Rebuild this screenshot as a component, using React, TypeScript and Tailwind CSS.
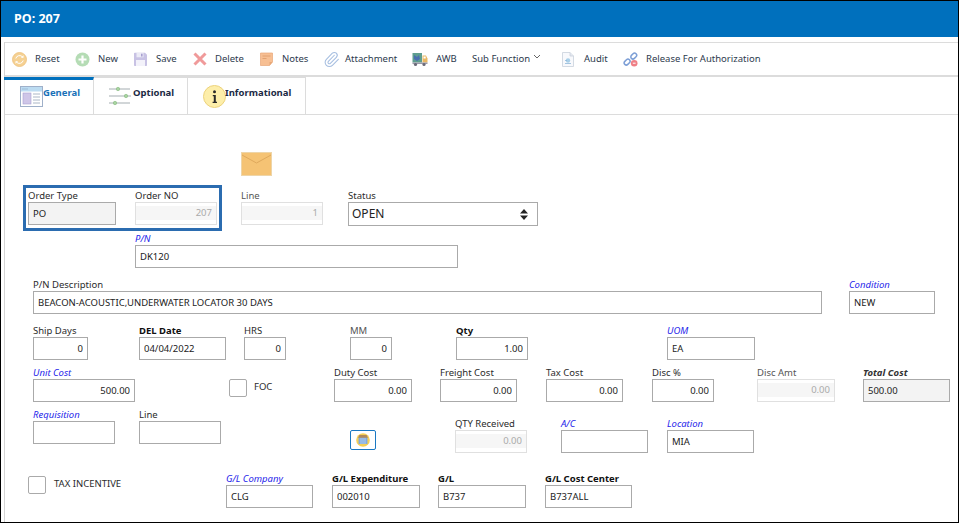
import React from "react";
import { Paperclip } from "lucide-react";

const FONT = "font-['Noto_Sans','Open_Sans',sans-serif]";

type Kind = "plain" | "blue" | "bold" | "total" | "muted";
const LABEL: Record<Kind, string> = {
  plain: "text-[#2b2b2b]",
  muted: "text-[#555]",
  blue: "italic text-[#2626ea]",
  bold: "font-bold text-[#111]",
  total: "italic font-bold text-[#333]",
};

function Field({
  label,
  kind = "plain",
  value = "",
  right = false,
  variant = "normal",
  className = "",
}: {
  label: string;
  kind?: Kind;
  value?: string;
  right?: boolean;
  variant?: "normal" | "grey" | "disabled";
  className?: string;
}) {
  const align = right ? "text-right" : "text-left";
  return (
    <div className={`flex flex-col shrink-0 ${className}`}>
      <label className={`h-[12px] text-[9.5px] leading-[12px] whitespace-nowrap ${LABEL[kind]}`}>{label}</label>
      {variant === "disabled" ? (
        <div className="h-[23px] border border-[#e0e0e0] bg-white pt-[3px]">
          <input
            readOnly
            value={value}
            className={`block w-full h-[14px] bg-[#f6f6f6] px-[4px] text-[9.5px] text-[#aaa] outline-none ${align}`}
          />
        </div>
      ) : (
        <input
          readOnly
          value={value}
          className={`block w-full h-[23px] border border-[#aaa] px-[4px] text-[9.5px] text-[#222] outline-none ${align} ${
            variant === "grey" ? "bg-[#f3f3f3]" : "bg-white"
          }`}
        />
      )}
    </div>
  );
}

function Tool({ icon, label, className, iconBox }: { icon: React.ReactNode; label: string; className: string; iconBox: string }) {
  return (
    <div className={`flex items-center shrink-0 text-[9.5px] text-[#2d3a4d] whitespace-nowrap ${className}`}>
      <span className={`flex items-center shrink-0 ${iconBox}`}>{icon}</span>
      <span className="mt-[1px]">{label}</span>
    </div>
  );
}

const ResetIcon = () => (
  <svg width="15" height="15" viewBox="0 0 15 15">
    <circle cx="7.5" cy="7.5" r="7" fill="#f5d193" stroke="#eebf78" strokeWidth="0.8" />
    <path d="M3.8 6.5A3.9 3.9 0 0 1 10.6 5" fill="none" stroke="#fff" strokeWidth="1" />
    <path d="M11.2 8.5A3.9 3.9 0 0 1 4.4 10" fill="none" stroke="#fff" strokeWidth="1" />
    <path d="M11.5 3.2v2.6H8.9z" fill="#fff" />
    <path d="M3.5 11.8V9.2h2.6z" fill="#fff" />
  </svg>
);
const NewIcon = () => (
  <svg width="15" height="15" viewBox="0 0 15 15">
    <circle cx="7.5" cy="7.5" r="7" fill="#b5dcb5" />
    <path d="M7.5 3.5v8M3.5 7.5h8" stroke="#fff" strokeWidth="2.2" />
  </svg>
);
const SaveIcon = () => (
  <svg width="15" height="15" viewBox="0 0 15 15">
    <path d="M1 1.5A.8.8 0 0 1 1.8.7H12l2 2v10.6a.8.8 0 0 1-.8.8H1.8a.8.8 0 0 1-.8-.8z" fill="#c8c2e4" />
    <rect x="3.5" y="1" width="7" height="4.3" fill="#ecebf6" />
    <rect x="8" y="1.7" width="1.6" height="2.8" fill="#a79fd0" />
    <rect x="3" y="8" width="9" height="6" fill="#f3f2fa" />
  </svg>
);
const DeleteIcon = () => (
  <svg width="14" height="14" viewBox="0 0 14 14">
    <path d="M1.5 1.5l11 11M12.5 1.5l-11 11" stroke="#f09a9a" strokeWidth="3" />
  </svg>
);
const NotesIcon = () => (
  <svg width="13" height="14" viewBox="0 0 13 14">
    <path d="M.5 1h12v9l-3 3.5H.5z" fill="#f7bf93" stroke="#e8a878" strokeWidth="0.7" />
    <path d="M2.5 4h8M2.5 6.5h4" stroke="#dc9a68" strokeWidth="0.8" />
    <path d="M12.5 10h-3v3.5z" fill="#e8a878" />
  </svg>
);
const TruckIcon = () => (
  <svg width="16" height="15" viewBox="0 0 16 15">
    <rect x="0.5" y="1" width="9.5" height="9.5" fill="#5f9e8f" />
    <path d="M2 3l3 2 2-2 1 4-3 2-3-2z" fill="#4a6fb0" />
    <path d="M10.5 3.5H14l1.5 3v4h-5z" fill="#e9b863" />
    <rect x="11.5" y="4.5" width="2.2" height="2" fill="#fff" />
    <rect x="0.5" y="10.5" width="15" height="1.5" fill="#9a9aa8" />
    <circle cx="3.5" cy="12.5" r="1.6" fill="#6a6a78" />
    <circle cx="12" cy="12.5" r="1.6" fill="#6a6a78" />
  </svg>
);
const AuditIcon = () => (
  <svg width="12" height="15" viewBox="0 0 12 15">
    <path d="M.5.5h7.5l3.5 3.5v10.5H.5z" fill="#f8f9fc" stroke="#c9d0dc" strokeWidth="0.8" />
    <path d="M8 .5V4h3.5" fill="#e4e8f0" stroke="#c9d0dc" strokeWidth="0.8" />
    <circle cx="6" cy="8.5" r="2.2" fill="#a9cfe8" />
    <path d="M3 8.5h2M3 11.5h6" stroke="#8fb8d8" strokeWidth="0.8" />
  </svg>
);
const ReleaseIcon = () => (
  <svg width="15" height="15" viewBox="0 0 15 15">
    <g fill="none" stroke="#7d9fd6" strokeWidth="1.5">
      <rect x="0.9" y="8" width="6.5" height="4.2" rx="2.1" transform="rotate(-45 4.1 10.1)" />
      <rect x="7.5" y="2" width="6.5" height="4.2" rx="2.1" transform="rotate(-45 10.7 4.1)" />
    </g>
    <circle cx="11.2" cy="11.2" r="3.3" fill="#ef7f86" />
    <path d="M9.8 11.2h2.8" stroke="#fff" strokeWidth="1" />
  </svg>
);
const GeneralIcon = () => (
  <svg width="23" height="21" viewBox="0 0 23 21" className="shrink-0">
    <rect x="0.5" y="0.5" width="22" height="20" fill="#fff" stroke="#9fb0c9" />
    <rect x="1" y="1" width="21" height="4.5" fill="#bcdcf2" />
    <path d="M2.5 3h1M4.5 3h1M6.5 3h1" stroke="#7f9bbc" />
    <rect x="3" y="7" width="8" height="11" fill="#cfc6e8" stroke="#a9a0cf" strokeWidth="0.6" />
    <path d="M13 8h7M13 11h7M13 14h7M13 17h7" stroke="#aab6c6" />
  </svg>
);
const OptionalIcon = () => (
  <svg width="23" height="20" viewBox="0 0 23 20" className="shrink-0">
    <g stroke="#9aa4a8" strokeWidth="0.9">
      <path d="M0 3h21M0 10h22M0 17h21" />
    </g>
    <g fill="#a8d4a0" stroke="#86b880" strokeWidth="0.6">
      <circle cx="9" cy="3" r="1.7" />
      <circle cx="17" cy="10" r="1.7" />
      <circle cx="6" cy="17" r="1.7" />
    </g>
  </svg>
);
const InfoIcon = () => (
  <svg width="23" height="23" viewBox="0 0 23 23" className="shrink-0">
    <circle cx="11.5" cy="11.5" r="11" fill="#fdeeaa" stroke="#ecd27c" />
    <circle cx="11.5" cy="6.8" r="1.5" fill="#2a2a2a" />
    <path d="M9.8 10h3v6.8h1.2v1.2H9.6v-1.2h1.2V11.2h-1z" fill="#2a2a2a" />
  </svg>
);
const EnvelopeIcon = () => (
  <svg width="31" height="24" viewBox="0 0 31 24">
    <rect x="0.5" y="0.5" width="30" height="23" fill="#f5c374" stroke="#eed5a8" />
    <path d="M1 3l14.5 8L30 3" fill="none" stroke="#dfa95c" strokeWidth="1" />
  </svg>
);
const Checkbox = () => <span className="block shrink-0 w-[18px] h-[18px] bg-white border border-[#aaa] rounded-[2px]" />;

export default function App() {
  return (
    <div className={`w-[959px] h-[523px] overflow-hidden bg-white border border-black ${FONT}`}>
      <header className="h-[36px] bg-[#0070bd] flex items-center pl-[13px] text-[12.5px] font-bold text-white">PO: 207</header>

      <div className="ml-[3px] mt-[5px] h-[480px] border-l border-[#d4d4d4]">
        {/* toolbar */}
        <div className="h-[35px] border-t border-b-2 border-[#dcdcdc] flex items-center pl-[7px]">
          <Tool className="w-[63px]" iconBox="w-[23px]" icon={<ResetIcon />} label="Reset" />
          <Tool className="w-[58px]" iconBox="w-[23px]" icon={<NewIcon />} label="New" />
          <Tool className="w-[60px]" iconBox="w-[23px]" icon={<SaveIcon />} label="Save" />
          <Tool className="w-[67px]" iconBox="w-[22px]" icon={<DeleteIcon />} label="Delete" />
          <Tool className="w-[63px]" iconBox="w-[22px]" icon={<NotesIcon />} label="Notes" />
          <Tool
            className="w-[89px]"
            iconBox="w-[22px]"
            icon={<Paperclip size={17} strokeWidth={1.5} className="text-[#a6bee0]" />}
            label="Attachment"
          />
          <Tool className="w-[60px]" iconBox="w-[24px]" icon={<TruckIcon />} label="AWB" />
          <div className="w-[90px] shrink-0 flex items-start mt-[1px] text-[9.5px] text-[#2d3a4d] whitespace-nowrap">
            <span>Sub Function</span>
            <svg width="8" height="5" viewBox="0 0 8 5" className="ml-[3px] mt-[2px]">
              <path d="M1 1l3 3 3-3" fill="none" stroke="#555" strokeWidth="0.9" />
            </svg>
          </div>
          <Tool className="w-[61px]" iconBox="w-[22px]" icon={<AuditIcon />} label="Audit" />
          <Tool className="" iconBox="w-[23px]" icon={<ReleaseIcon />} label="Release For Authorization" />
        </div>

        {/* tabs */}
        <div className="h-[38px] border-b border-[#dcdcdc] flex">
          <div className="relative w-[90px] border-r border-[#dcdcdc] border-t-[3px] border-t-[#0070bd] -ml-px pl-[16px] pt-[6px] flex items-start text-[9.5px] leading-[12px] font-bold text-[#1a72b8]">
            <GeneralIcon />
            <span className="mt-[1px]">General</span>
          </div>
          <div className="w-[94px] border-r border-t border-[#dcdcdc] pl-[15px] pt-[8px] flex items-start text-[9.5px] leading-[12px] font-bold text-[#1b2a44]">
            <OptionalIcon />
            <span className="ml-[1px] mt-[1px]">Optional</span>
          </div>
          <div className="w-[118px] border-r border-t border-[#dcdcdc] pl-[15px] pt-[7px] flex items-start text-[9.5px] leading-[12px] font-bold text-[#1b2a44]">
            <InfoIcon />
            <span className="-ml-px mt-[2px]">Informational</span>
          </div>
        </div>

        {/* form */}
        <div className="flex flex-col">
          <div className="ml-[236px] mt-[37px] h-[24px]">
            <EnvelopeIcon />
          </div>

          <div className="flex items-start mt-[9px]">
            <div className="ml-[18px] w-[199px] h-[46px] border-[3px] border-[#2b6cb0] flex items-start pt-[2px] pl-[2px]">
              <Field className="w-[88px]" label="Order Type" value="PO" variant="grey" />
              <Field className="ml-[19px] w-[82px]" label="Order NO" value="207" right variant="disabled" />
            </div>
            <Field className="ml-[19px] mt-[5px] w-[82px]" label="Line" kind="muted" value="1" right variant="disabled" />
            <div className="ml-[25px] mt-[5px] w-[190px] shrink-0 flex flex-col">
              <label className="h-[12px] text-[9.5px] leading-[12px] text-[#2b2b2b]">Status</label>
              <div className="h-[24px] border border-[#aaa] flex items-center justify-between pl-[3px] pr-[9px] text-[12px] text-[#222]">
                <span>OPEN</span>
                <svg width="8" height="11" viewBox="0 0 8 11">
                  <path d="M4 0l4 4.5H0zM4 11L0 6.5h8z" fill="#222" />
                </svg>
              </div>
            </div>
          </div>

          <div className="flex mt-[2px]">
            <Field className="ml-[130px] w-[323px]" label="P/N" kind="blue" value="DK120" />
          </div>

          <div className="flex mt-[11px]">
            <Field className="ml-[28px] w-[789px]" label="P/N Description" value="BEACON-ACOUSTIC,UNDERWATER LOCATOR 30 DAYS" />
            <Field className="ml-[27px] w-[86px]" label="Condition" kind="blue" value="NEW" />
          </div>

          <div className="flex mt-[11px]">
            <Field className="ml-[28px] w-[55px]" label="Ship Days" value="0" right />
            <Field className="ml-[51px] w-[87px]" label="DEL Date" kind="bold" value="04/04/2022" />
            <Field className="ml-[18px] w-[42px]" label="HRS" value="0" right />
            <Field className="ml-[64px] w-[42px]" label="MM" kind="muted" value="0" right />
            <Field className="ml-[64px] w-[72px]" label="Qty" kind="bold" value="1.00" right />
            <Field className="ml-[139px] w-[88px]" label="UOM" kind="blue" value="EA" />
          </div>

          <div className="flex mt-[7px]">
            <Field className="ml-[28px] w-[102px]" label="Unit Cost" kind="blue" value="500.00" right />
            <div className="ml-[94px] w-[105px] mt-[12px] shrink-0 flex items-start">
              <Checkbox />
              <span className="ml-[7px] mt-[2px] text-[9.5px] leading-[12px] text-[#2b2b2b]">FOC</span>
            </div>
            <Field className="w-[78px]" label="Duty Cost" value="0.00" right />
            <Field className="ml-[28px] w-[77px]" label="Freight Cost" value="0.00" right />
            <Field className="ml-[29px] w-[77px]" label="Tax Cost" value="0.00" right />
            <Field className="ml-[29px] w-[62px]" label="Disc %" value="0.00" right />
            <Field className="ml-[43px] w-[78px]" label="Disc Amt" kind="muted" value="0.00" right variant="disabled" />
            <Field className="ml-[28px] w-[87px]" label="Total Cost" kind="total" value="500.00" variant="grey" />
          </div>

          <div className="flex items-start mt-[7px]">
            <Field className="ml-[28px] w-[82px]" label="Requisition" kind="blue" />
            <Field className="ml-[24px] w-[82px]" label="Line" />
            <button className="ml-[129px] mt-[21px] w-[26px] h-[20px] shrink-0 border border-[#1a78c2] rounded-[2px] bg-white flex items-center justify-center">
              <svg width="14" height="14" viewBox="0 0 14 14">
                <circle cx="7" cy="7" r="6.8" fill="#f5cf55" />
                <rect x="2.6" y="4" width="8.8" height="7" fill="#7ea9df" />
                <path d="M2 4.8L3.4 2h7.2L12 4.8z" fill="#b08a5a" />
                <path d="M5 5v6M7 5v6M9 5v6" stroke="#c6dcf4" strokeWidth="0.7" />
              </svg>
            </button>
            <Field className="ml-[79px] mt-[9px] w-[72px]" label="QTY Received" value="0.00" right variant="disabled" />
            <Field className="ml-[34px] mt-[9px] w-[87px]" label="A/C" kind="blue" />
            <Field className="ml-[19px] mt-[9px] w-[87px]" label="Location" kind="blue" value="MIA" />
          </div>

          <div className="flex items-start mt-[20px]">
            <div className="ml-[23px] w-[198px] mt-[3px] shrink-0 flex items-start">
              <Checkbox />
              <span className="ml-[8px] mt-[2px] text-[9.5px] leading-[12px] text-[#2b2b2b]">TAX INCENTIVE</span>
            </div>
            <Field className="w-[87px]" label="G/L Company" kind="blue" value="CLG" />
            <Field className="ml-[19px] w-[88px]" label="G/L Expenditure" kind="bold" value="002010" />
            <Field className="ml-[18px] w-[88px]" label="G/L" kind="bold" value="B737" />
            <Field className="ml-[19px] w-[87px]" label="G/L Cost Center" kind="bold" value="B737ALL" />
          </div>
        </div>
      </div>
    </div>
  );
}
